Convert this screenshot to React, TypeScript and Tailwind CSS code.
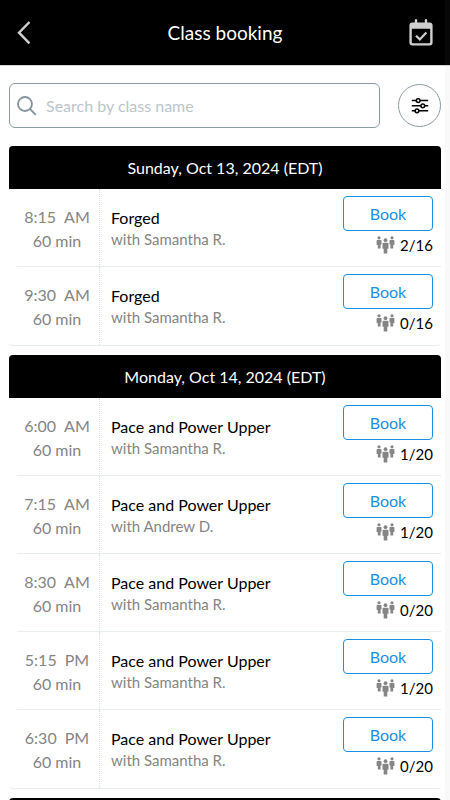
type ClassItem = {
  time: string;
  period: string;
  name: string;
  coach: string;
  spots: string;
};

type Day = { label: string; classes: ClassItem[] };

const upper = (time: string, period: string, coach: string, spots: string): ClassItem => ({
  time,
  period,
  name: "Pace and Power Upper",
  coach,
  spots,
});

const days: Day[] = [
  {
    label: "Sunday, Oct 13, 2024 (EDT)",
    classes: [
      { time: "8:15", period: "AM", name: "Forged", coach: "Samantha R.", spots: "2/16" },
      { time: "9:30", period: "AM", name: "Forged", coach: "Samantha R.", spots: "0/16" },
    ],
  },
  {
    label: "Monday, Oct 14, 2024 (EDT)",
    classes: [
      upper("6:00", "AM", "Samantha R.", "1/20"),
      upper("7:15", "AM", "Andrew D.", "1/20"),
      upper("8:30", "AM", "Samantha R.", "0/20"),
      upper("5:15", "PM", "Samantha R.", "1/20"),
      upper("6:30", "PM", "Samantha R.", "0/20"),
    ],
  },
  { label: "", classes: [] },
];

function BackIcon() {
  return (
    <svg width="14" height="24" viewBox="0 0 14 24" fill="none" stroke="#cfcfcf" strokeWidth="2.4" aria-hidden="true">
      <path d="M12.5 1 2 11.7l10.5 10.7" />
    </svg>
  );
}

function CalendarIcon() {
  return (
    <svg width="24" height="28" viewBox="0 0 24 28" aria-hidden="true">
      <path
        fill="#cfcfcf"
        fillRule="evenodd"
        d="M3.4 3.4h17.2A3 3 0 0 1 23.6 6.4v17.2a3 3 0 0 1-3 3H3.4a3 3 0 0 1-3-3V6.4a3 3 0 0 1 3-3ZM2.8 9.8V23.2a1 1 0 0 0 1 1h16.4a1 1 0 0 0 1-1V9.8Z"
      />
      <path d="M7 1.3v4M17 1.3v4" fill="none" stroke="#cfcfcf" strokeWidth="2.4" strokeLinecap="round" />
      <path d="m7 16.8 3.8 3.6 6.6-6.8" fill="none" stroke="#cfcfcf" strokeWidth="2.2" />
    </svg>
  );
}

function SearchIcon() {
  return (
    <svg width="20" height="20" viewBox="0 0 20 20" fill="none" stroke="#8495a0" strokeWidth="1.8" aria-hidden="true">
      <circle cx="8" cy="8" r="7" />
      <path d="m13 13 5.8 5.8" />
    </svg>
  );
}

function FilterIcon() {
  return (
    <svg width="18" height="16" viewBox="0 0 18 16" fill="none" stroke="#000" strokeWidth="1.5" aria-hidden="true">
      <path d="M.8 2.6h4.4m4 0h8M.8 7.8h9m4 0h3.4M.8 12.8h3.2m4 0h9.2" />
      <circle cx="7.2" cy="2.6" r="1.9" />
      <circle cx="11.8" cy="7.8" r="1.9" />
      <circle cx="6" cy="12.8" r="1.9" />
    </svg>
  );
}

function PeopleIcon() {
  return (
    <svg width="19" height="18" viewBox="0 0 19 18" fill="#858585" aria-hidden="true">
      <circle cx="3" cy="1.8" r="1.6" />
      <path d="M1.2 4h3.6a.8.8 0 0 1 .7.8v3.6h-.9v4H1.8V9H.6V4.8a.8.8 0 0 1 .6-.8Z" />
      <circle cx="16" cy="1.8" r="1.6" />
      <path d="M14.2 4h3.6a.8.8 0 0 1 .6.8V9h-1.2v3.4h-2.8v-4h-.9V4.8a.8.8 0 0 1 .7-.8Z" />
      <circle cx="9.5" cy="4.2" r="1.9" />
      <path d="M7.5 6.8h4a1 1 0 0 1 1 1v5h-1.2v4.8H7.7v-4.8H6.5v-5a1 1 0 0 1 1-1Z" />
    </svg>
  );
}

function ClassRow({ item }: { item: ClassItem }) {
  return (
    <li className="group flex h-[78px]">
      <div className="ml-2 flex w-[83px] shrink-0 flex-col items-center border-r border-dotted border-[#dcdfe1] border-b border-b-[#e8eef0] pt-4 pr-0.5 text-base leading-6 text-[#858585] [border-bottom-style:solid] group-last:border-b-0">
        <div className="flex gap-2">
          <span>{item.time}</span>
          <span>{item.period}</span>
        </div>
        <span>60 min</span>
      </div>
      <div className="flex min-w-0 flex-1 justify-between border-b border-[#e8eef0] pr-2 pl-[11px] group-last:border-b-0">
        <div className="pt-[18px]">
          <h3 className="text-base leading-[22px] text-black">{item.name}</h3>
          <p className="text-[15px] leading-5 text-[#858585]">with {item.coach}</p>
        </div>
        <div className="flex w-[90px] shrink-0 flex-col items-end pt-[7px]">
          <button type="button" className="h-[35px] w-full rounded border border-[#1a8fe3] text-base leading-6 text-[#1a8fe3]">
            Book
          </button>
          <div className="flex items-center gap-[5px] pt-0.5">
            <PeopleIcon />
            <span className="text-[15px] leading-6 text-black">{item.spots}</span>
          </div>
        </div>
      </div>
    </li>
  );
}

export default function App() {
  return (
    <div className="relative flex h-screen flex-col overflow-hidden bg-white font-['Lato',sans-serif]">
      <header className="grid h-[65px] shrink-0 grid-cols-[1fr_auto_1fr] items-center bg-black px-[17px] text-white">
        <button type="button" aria-label="Back" className="justify-self-start">
          <BackIcon />
        </button>
        <h1 className="text-[19px] leading-7">Class booking</h1>
        <button type="button" aria-label="My bookings" className="justify-self-end">
          <CalendarIcon />
        </button>
      </header>
      <main className="min-h-0 flex-1 overflow-y-auto border-t border-[#d5d8da] px-[9px] pt-[17px] [scrollbar-width:none]">
        <div className="flex items-center gap-[18px]">
          <label className="flex h-[45px] min-w-0 flex-1 items-center gap-[9px] rounded-md border border-[#8a9aa5] px-[7px]">
            <SearchIcon />
            <input
              type="text"
              aria-label="Search by class name"
              placeholder="Search by class name"
              className="min-w-0 flex-1 text-base outline-none placeholder:text-[#bcc5ca]"
            />
          </label>
          <button
            type="button"
            aria-label="Filter classes"
            className="flex size-[43px] shrink-0 items-center justify-center rounded-full border border-[#8a9aa5]"
          >
            <FilterIcon />
          </button>
        </div>
        <div className="flex flex-col gap-[9px] pt-[18px]">
          {days.map((day, index) => (
            <section key={index} className="rounded border-b border-[#e8eef0]">
              <h2 className="flex h-[43px] items-center justify-center rounded-t bg-black text-base text-white">
                {day.label}
              </h2>
              <ul>
                {day.classes.map((item) => (
                  <ClassRow key={item.time} item={item} />
                ))}
              </ul>
            </section>
          ))}
        </div>
      </main>
      <div className="pointer-events-none absolute inset-y-0 right-0 w-[5px] bg-[#808080]/5" />
    </div>
  );
}
